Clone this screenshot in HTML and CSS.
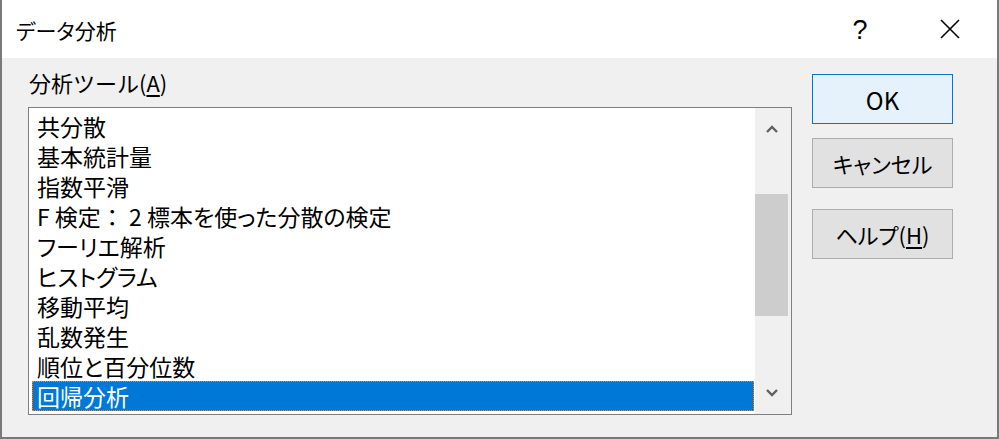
FILE: index.html
```html
<!DOCTYPE html>
<html lang="ja">
<head>
<meta charset="utf-8">
<title>データ分析</title>
<link rel="stylesheet" href="styles.css">
</head>
<body>
<div class="window">
  <div class="titlebar">
    <span class="title">データ分析</span>
    <span class="help-btn">?</span>
    <span class="close-btn">
      <svg width="20" height="20" viewBox="0 0 20 20"><path d="M1 1 L19 19 M19 1 L1 19" stroke="#000" stroke-width="1.6" fill="none"/></svg>
    </span>
  </div>
  <div class="body">
    <div class="left">
      <div class="label">分析ツール(<u>A</u>)</div>
      <div class="listbox">
        <ul class="items">
          <li><span>共分散</span></li>
          <li><span>基本統計量</span></li>
          <li><span>指数平滑</span></li>
          <li><span>F 検定<span class="fw">：</span> 2 標本を使った分散の検定</span></li>
          <li><span>フーリエ解析</span></li>
          <li><span>ヒストグラム</span></li>
          <li><span>移動平均</span></li>
          <li><span>乱数発生</span></li>
          <li><span>順位と百分位数</span></li>
          <li class="selected"><span>回帰分析</span></li>
        </ul>
        <div class="scrollbar">
          <div class="arrow">
            <svg width="12" height="8" viewBox="0 0 12 8"><path d="M1 7 L6 2 L11 7" stroke="#606060" stroke-width="2.4" fill="none"/></svg>
          </div>
          <div class="track">
            <div class="thumb" style="margin-top:44px;height:122px"></div>
          </div>
          <div class="arrow">
            <svg width="12" height="8" viewBox="0 0 12 8"><path d="M1 1 L6 6 L11 1" stroke="#606060" stroke-width="2.4" fill="none"/></svg>
          </div>
        </div>
      </div>
    </div>
    <div class="buttons">
      <div class="btn default"><span class="ok">OK</span></div>
      <div class="btn">キャンセル</div>
      <div class="btn help">ヘルプ(<u>H</u>)</div>
    </div>
  </div>
</div>
</body>
</html>
```
FILE: styles.css
```css
* { box-sizing: border-box; }
html, body { margin: 0; padding: 0; background: #ffffff; }
body {
  font-family: "Noto Sans CJK JP", "Noto Sans", sans-serif;
  font-feature-settings: "palt";
  color: #000;
}
.window {
  width: 999px;
  height: 439px;
  border: 2px solid #7a7a7a;
  border-top: none;
  display: flex;
  flex-direction: column;
  background: #f0f0f0;
}
.titlebar {
  height: 58px;
  background: #ffffff;
  display: flex;
  align-items: center;
  padding-left: 14px;
}
.title {
  font-size: 21px;
  flex: 1;
  line-height: 30px;
  margin-top: 2px;
}
.help-btn {
  font-family: "Liberation Sans", sans-serif;
  font-size: 27px;
  font-weight: 300;
  width: 30px;
  text-align: center;
  margin-right: 65px;
  margin-top: 2px;
}
.close-btn {
  width: 20px;
  height: 20px;
  margin-right: 37px;
  display: flex;
}
.body {
  flex: 1;
  display: flex;
  padding-left: 26px;
}
.left {
  width: 764px;
  display: flex;
  flex-direction: column;
}
.label {
  font-size: 22px;
  font-feature-settings: normal;
  line-height: 30px;
  margin-top: 9px;
  margin-bottom: 10px;
  padding-left: 1px;
}
u { text-underline-offset: 3px; text-decoration-thickness: 2px; }
.listbox {
  height: 308px;
  border: 1px solid #7f7f7f;
  display: flex;
  background: #ffffff;
}
.items {
  list-style: none;
  margin: 0;
  padding: 3px 1px 0 3px;
  flex: 1;
}
.items li {
  height: 30px;
  font-size: 23px;
  padding-left: 5px;
  white-space: nowrap;
  display: flex;
  align-items: center;
}
.items li > span {
  line-height: 28px;
  display: inline-block;
}
.fw { font-feature-settings: normal; }
.items li.selected {
  background: #0078d7;
  color: #ffffff;
  outline: 1px dotted #e08a3c;
  outline-offset: -1px;
}
.scrollbar {
  width: 36px;
  background: #f0f0f0;
  padding-right: 3px;
  display: flex;
  flex-direction: column;
}
.arrow {
  height: 42px;
  display: flex;
  align-items: center;
  justify-content: center;
}
.track {
  flex: 1;
}
.thumb {
  background: #cdcdcd;
  width: 100%;
}
.buttons {
  margin-left: 20px;
  padding-top: 16px;
  display: flex;
  flex-direction: column;
  width: 141px;
}
.btn {
  height: 50px;
  border: 1px solid #adadad;
  background: #e1e1e1;
  display: flex;
  align-items: center;
  justify-content: center;
  font-size: 22px;
  margin-bottom: 14px;
}
.btn .ok { font-size: 24px; }
.btn.default {
  background: #e5f1fb;
  border-color: #0078d7;
}
.btn.help {
  margin-top: 7px;
}
```
